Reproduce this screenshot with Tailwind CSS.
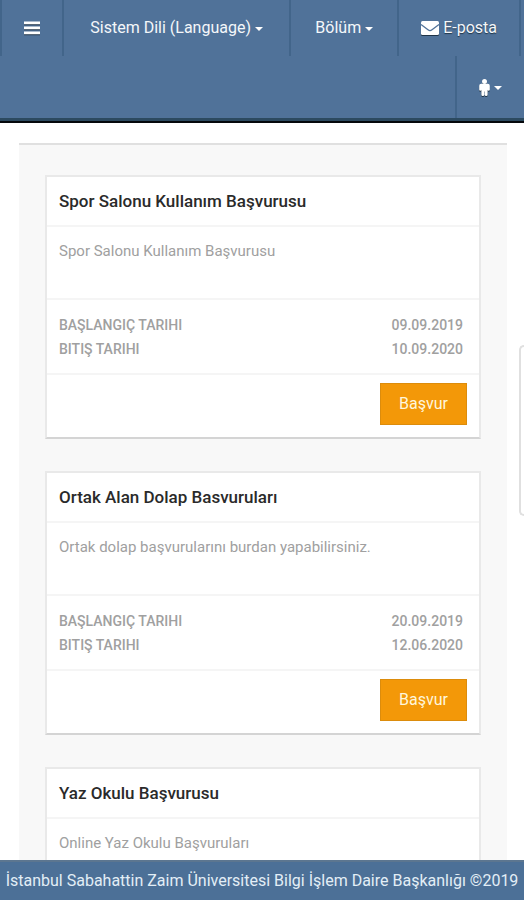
<!DOCTYPE html>
<html lang="tr">
<head>
<meta charset="utf-8">
<meta name="viewport" content="width=device-width, initial-scale=1">
<title>Başvurular</title>
<script src="https://cdn.jsdelivr.net/npm/@tailwindcss/browser@4"></script>
</head>
<body class="relative flex h-screen flex-col overflow-hidden bg-white font-[Roboto,'Noto_Sans',sans-serif] text-[#a0a0a0]">
<header class="shrink-0 border-b-2 border-[#05080c] bg-[#507299] text-base text-[#f4f7fa] [text-shadow:0_1px_1px_#1f3448]">
  <nav class="border-b-3 border-[#2c4a60]">
    <div class="flex h-14 pr-[3px]">
      <button type="button" aria-label="Menü" class="flex items-center border-x-2 border-[#42658a] px-[22px]">
        <svg class="h-4 w-4 drop-shadow-[0_1px_0_#1f3448]" viewBox="0 0 16 16" fill="#fff" aria-hidden="true"><path d="M0 1.5h16v2.7H0zM0 6.5h16v2.7H0zM0 11.5h16v2.7H0z"/></svg>
      </button>
      <button type="button" class="flex grow items-center justify-center gap-1 border-r-2 border-[#42658a] whitespace-nowrap">Sistem Dili (Language)
        <svg class="h-2 w-2" viewBox="0 0 8 8" fill="#fff" aria-hidden="true"><path d="M0 3h8L4 7z"/></svg>
      </button>
      <button type="button" class="flex items-center gap-1 border-r-2 border-[#42658a] px-6">Bölüm
        <svg class="h-2 w-2" viewBox="0 0 8 8" fill="#fff" aria-hidden="true"><path d="M0 3h8L4 7z"/></svg>
      </button>
      <a href="#" class="flex items-center gap-1 border-r-2 border-[#42658a] px-[22px] whitespace-nowrap">
        <svg class="h-4 w-[18px] drop-shadow-[0_1px_0_#1f3448]" viewBox="0 0 18 16" aria-hidden="true"><rect y="1" width="18" height="14" rx="1.5" fill="#fff"/><path d="M0 4.5l7 5.3q2 1.5 4 0l7-5.3" fill="none" stroke="#507299" stroke-width="1.3"/></svg>
        E-posta
      </a>
    </div>
    <div class="flex h-[62px] justify-end">
      <button type="button" aria-label="Kullanıcı" class="flex items-center gap-1 border-l-2 border-[#42658a] px-[22px]">
        <svg class="h-[17px] w-[11px] drop-shadow-[0_1px_0_#1f3448]" viewBox="0 0 11 17" fill="#fff" aria-hidden="true"><circle cx="5.5" cy="2.5" r="2.5"/><path d="M2.3 4.8h6.4q2.1 0 2.1 2v4q0 1-1.1 1t-1.1-1V15.800q0 1.200-1.400 1.200T5.700 16v-3.500h-.4V16q0 1-1.500 1T2.400 15.800v-5q0 1-1.100 1t-1.100-1v-4q0-2 2.100-2z"/></svg>
        <svg class="h-2 w-2" viewBox="0 0 8 8" fill="#fff" aria-hidden="true"><path d="M0 3h8L4 7z"/></svg>
      </button>
    </div>
  </nav>
</header>

<main class="min-h-0 flex-1 overflow-y-auto pt-5 pr-[17px] pl-[19px] [scrollbar-width:none]">
  <div class="flex min-h-full flex-col gap-8 border-t-2 border-[#e0e0e0] bg-[#f8f8f8] px-[26px] pt-[30px]">
    <article class="border-2 border-[#e9e9e9] border-b-[#d4d4d4] bg-white">
      <h2 class="border-b-2 border-[#f5f5f5] px-3 py-3 text-[17px] leading-6 font-medium text-[#2a2a2a]">Spor Salonu Kullanım Başvurusu</h2>
      <p class="h-[73px] border-b-2 border-[#f5f5f5] px-3 pt-3 text-[15px] leading-6">Spor Salonu Kullanım Başvurusu</p>
      <dl class="grid grid-cols-[1fr_auto] border-b-2 border-[#f5f5f5] pt-[13px] pr-4 pb-3 pl-3 text-sm leading-6 font-medium">
        <dt>BAŞLANGIÇ TARIHI</dt><dd>09.09.2019</dd>
        <dt>BITIŞ TARIHI</dt><dd>10.09.2020</dd>
      </dl>
      <div class="flex justify-end pt-2 pr-3 pb-3"><button type="button" class="h-[42px] border border-[#dc8c0c] bg-[#f39808] px-[18px] text-base text-[#fff6dc]">Başvur</button></div>
    </article>
    <article class="border-2 border-[#e9e9e9] border-b-[#d4d4d4] bg-white">
      <h2 class="border-b-2 border-[#f5f5f5] px-3 py-3 text-[17px] leading-6 font-medium text-[#2a2a2a]">Ortak Alan Dolap Basvuruları</h2>
      <p class="h-[73px] border-b-2 border-[#f5f5f5] px-3 pt-3 text-[15px] leading-6">Ortak dolap başvurularını burdan yapabilirsiniz.</p>
      <dl class="grid grid-cols-[1fr_auto] border-b-2 border-[#f5f5f5] pt-[13px] pr-4 pb-3 pl-3 text-sm leading-6 font-medium">
        <dt>BAŞLANGIÇ TARIHI</dt><dd>20.09.2019</dd>
        <dt>BITIŞ TARIHI</dt><dd>12.06.2020</dd>
      </dl>
      <div class="flex justify-end pt-2 pr-3 pb-3"><button type="button" class="h-[42px] border border-[#dc8c0c] bg-[#f39808] px-[18px] text-base text-[#fff6dc]">Başvur</button></div>
    </article>
    <article class="border-2 border-[#e9e9e9] border-b-[#d4d4d4] bg-white">
      <h2 class="border-b-2 border-[#f5f5f5] px-3 py-3 text-[17px] leading-6 font-medium text-[#2a2a2a]">Yaz Okulu Başvurusu</h2>
      <p class="h-[73px] px-3 pt-3 text-[15px] leading-6">Online Yaz Okulu Başvuruları</p>
    </article>
  </div>
</main>

<footer class="flex h-10 shrink-0 items-center justify-center border-t-2 border-[#5c7690] bg-[#4c7097] text-base whitespace-nowrap text-[#e3eef6]">İstanbul Sabahattin Zaim Üniversitesi Bilgi İşlem Daire Başkanlığı ©2019</footer>

<aside aria-label="Yan panel" class="absolute top-[345px] right-0 h-[171px] w-[5px] rounded-l-md border-2 border-r-0 border-[#e0e0e0] bg-white"></aside>
</body>
</html>
